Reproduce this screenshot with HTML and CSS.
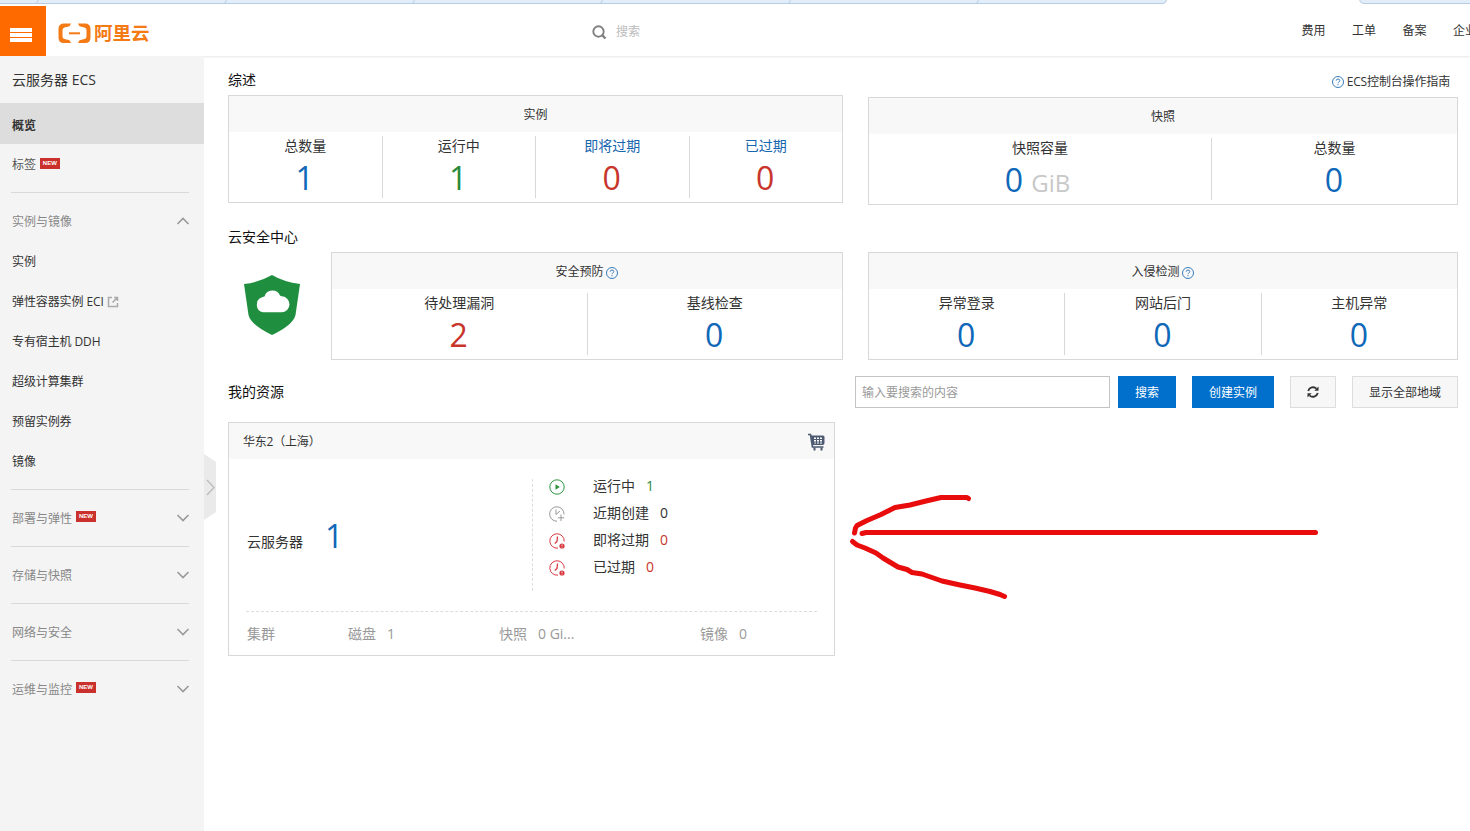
FILE: index.html
```
<!DOCTYPE html>
<html lang="zh-CN">
<head>
    <meta charset="UTF-8">
    <meta name="viewport" content="width=device-width, initial-scale=1.0">
    <title>云服务器 ECS</title>
    <link rel="stylesheet" href="styles.css">
</head>
<body>
    <!-- browser tabs -->
    <div class="tabs">
        <svg width="1470" height="6" viewBox="0 0 1470 6">
            <path d="M-2 -2V3.5H1163Q1166 3.5 1167 -1V-2Z" fill="#e2edfa" stroke="#b9cbe0"/>
            <path d="M1359 -2Q1360 3.5 1363 3.5H1472V-2Z" fill="#e2edfa" stroke="#b9cbe0"/>
            <path d="M38.500 0L36.500 3M226.500 0L225 3M414.500 0L413 3M602.500 0L601 3M790.500 0L789 3M978.500 0L977 3" stroke="#b9cbe0" fill="none"/>
        </svg>
    </div>

    <header class="header">
        <button class="menu"><i></i><i></i><i></i></button>
        <div class="logo">
            <svg width="33" height="21" viewBox="0 0 33 21">
                <path d="M13 0.500H6Q0.500 0.500 0.500 6V14.500Q0.500 20 6 20H13L11.500 17.200L6.500 16Q4.500 15.500 4.500 13.500V7Q4.500 5 6.500 4.500L11.500 3.300Z" fill="#f37a15"/>
                <path d="M20 0.500H27Q32.500 0.500 32.500 6V14.500Q32.500 20 27 20H20L21.500 17.200L26.500 16Q28.500 15.500 28.500 13.500V7Q28.500 5 26.500 4.500L21.500 3.300Z" fill="#f37a15"/>
                <path d="M11 10.300H22" stroke="#f37a15" stroke-width="2"/>
            </svg>
            <span>阿里云</span>
        </div>
        <div class="search">
            <svg width="15" height="15" viewBox="0 0 15 15" fill="none" stroke="#808080" stroke-width="1.900">
                <circle cx="6.500" cy="6.500" r="5.200"/>
                <path d="M10.200 10.200L13.500 13.500" stroke-width="2.400"/>
            </svg>
            <span>搜索</span>
        </div>
        <nav class="nav">
            <a href="#">费用</a>
            <a href="#">工单</a>
            <a href="#">备案</a>
            <a href="#">企业</a>
        </nav>
    </header>

    <div class="wrap">
        <aside class="side">
            <h1>云服务器 ECS</h1>
            <a class="item on" href="#">概览</a>
            <a class="item tag" href="#">标签<em class="new">NEW</em></a>

            <div class="group open">
                <h2>实例与镜像<svg class="arr" width="14" height="8" viewBox="0 0 14 8"><path d="M1.500 7L7 1.500L12.500 7"/></svg></h2>
                <ul>
                    <li><a class="item" href="#">实例</a></li>
                    <li><a class="item" href="#">弹性容器实例 ECI<svg class="ext" width="12" height="12" viewBox="0 0 12 12"><path d="M5 1.500H1.500V10.500H10.500V7M7 1.500H10.500V5M10.500 1.500L5.500 6.500"/></svg></a></li>
                    <li><a class="item" href="#">专有宿主机 DDH</a></li>
                    <li><a class="item" href="#">超级计算集群</a></li>
                    <li><a class="item" href="#">预留实例券</a></li>
                    <li><a class="item" href="#">镜像</a></li>
                </ul>
            </div>
            <div class="group">
                <h2>部署与弹性<em class="new">NEW</em><svg class="arr" width="14" height="8" viewBox="0 0 14 8"><path d="M1.500 1L7 6.500L12.500 1"/></svg></h2>
            </div>
            <div class="group">
                <h2>存储与快照<svg class="arr" width="14" height="8" viewBox="0 0 14 8"><path d="M1.500 1L7 6.500L12.500 1"/></svg></h2>
            </div>
            <div class="group">
                <h2>网络与安全<svg class="arr" width="14" height="8" viewBox="0 0 14 8"><path d="M1.500 1L7 6.500L12.500 1"/></svg></h2>
            </div>
            <div class="group">
                <h2>运维与监控<em class="new">NEW</em><svg class="arr" width="14" height="8" viewBox="0 0 14 8"><path d="M1.500 1L7 6.500L12.500 1"/></svg></h2>
            </div>
            <svg class="fold" width="12" height="66" viewBox="0 0 12 66">
                <path d="M0 0L12 8V58L0 66Z" fill="#eaeaea"/>
                <path d="M3 26L10 33.500L3 41" fill="none" stroke="#bbb" stroke-width="1.300"/>
            </svg>
        </aside>

        <main class="main">
            <!-- 综述 -->
            <section class="row overview">
                <div class="col-l">
                    <h3>综述</h3>
                    <div class="panel">
                        <h4>实例</h4>
                        <ul>
                            <li><p>总数量</p><b class="blue">1</b></li>
                            <li><p>运行中</p><b class="green">1</b></li>
                            <li><p class="link">即将过期</p><b class="red">0</b></li>
                            <li><p class="link">已过期</p><b class="red">0</b></li>
                        </ul>
                    </div>
                </div>
                <div class="col-r">
                    <a class="guide" href="#"><svg class="help" width="12" height="12" viewBox="0 0 12 12"><circle cx="6" cy="6" r="5.500"/><path d="M4.200 4.700Q4.300 3 6 3T7.800 4.600Q7.800 5.400 6.800 6Q6 6.500 6 7.200M6 8.200V9.300"/></svg>ECS控制台操作指南</a>
                    <div class="panel">
                        <h4>快照</h4>
                        <ul class="snap">
                            <li><p>快照容量</p><b class="blue">0 <small>GiB</small></b></li>
                            <li><p>总数量</p><b class="blue">0</b></li>
                        </ul>
                    </div>
                </div>
            </section>

            <!-- 云安全中心 -->
            <section>
                <h3 class="safe-tit">云安全中心</h3>
                <div class="row">
                    <div class="col-l safe">
                        <svg class="shield" width="56" height="60" viewBox="0 0 56 60">
                            <path d="M28 0Q40 7 56 9L51.500 40Q49 50 28 60Q7 50 4.500 40L0 9Q16 7 28 0Z" fill="#1f8f3f"/>
                            <path d="M19 37.300A7.800 7.800 0 0 1 18 22.300Q19.500 21.500 20.500 21.500A8.200 8.200 0 0 1 36 20.500Q37 21.300 37.500 21.300A8 8 0 0 1 37.500 37.300Z" fill="#fff"/>
                        </svg>
                        <div class="panel">
                            <h4>安全预防<svg class="help" width="12" height="12" viewBox="0 0 12 12"><circle cx="6" cy="6" r="5.500"/><path d="M4.200 4.700Q4.300 3 6 3T7.800 4.600Q7.800 5.400 6.800 6Q6 6.500 6 7.200M6 8.200V9.300"/></svg></h4>
                            <ul>
                                <li><p>待处理漏洞</p><b class="red">2</b></li>
                                <li><p>基线检查</p><b class="blue">0</b></li>
                            </ul>
                        </div>
                    </div>
                    <div class="col-r">
                        <div class="panel">
                            <h4>入侵检测<svg class="help" width="12" height="12" viewBox="0 0 12 12"><circle cx="6" cy="6" r="5.500"/><path d="M4.200 4.700Q4.300 3 6 3T7.800 4.600Q7.800 5.400 6.800 6Q6 6.500 6 7.200M6 8.200V9.300"/></svg></h4>
                            <ul>
                                <li><p>异常登录</p><b class="blue">0</b></li>
                                <li><p>网站后门</p><b class="blue">0</b></li>
                                <li><p>主机异常</p><b class="blue">0</b></li>
                            </ul>
                        </div>
                    </div>
                </div>
            </section>

            <!-- 我的资源 -->
            <section>
                <div class="bar">
                    <h3>我的资源</h3>
                    <form action="">
                        <input type="text" placeholder="输入要搜索的内容">
                        <button type="button" class="btn primary">搜索</button>
                    </form>
                    <button class="btn primary create">创建实例</button>
                    <button class="btn reload">
                        <svg width="12" height="12" viewBox="0 0 12 12">
                            <path d="M1.200 5A5 5 0 0 1 9.500 2.700M10.800 7A5 5 0 0 1 2.500 9.300" fill="none" stroke="#333" stroke-width="1.800"/>
                            <path d="M11.500 0.500V4.700H7.300ZM0.500 11.500V7.300H4.700Z" fill="#333"/>
                        </svg>
                    </button>
                    <button class="btn all">显示全部地域</button>
                </div>

                <div class="card">
                    <h4><span>华东2（上海）</span>
                        <svg width="17" height="18" viewBox="0 0 17 18">
                            <path d="M0 1.500H2.500L4.500 14H15.500" fill="none" stroke="#4c5b72" stroke-width="1.700"/>
                            <path d="M3 2.500H15Q16.500 2.500 16.500 4V10Q16.500 12 14.500 12H4.500Z" fill="#4c5b72"/>
                            <path d="M6 4.500H8V6H6ZM9 4.500H11V6H9ZM12 4.500H14V6H12ZM6 7H8V8.500H6ZM9 7H11V8.500H9ZM12 7H14V8.500H12ZM6.500 9.500H8V10.500H6.500ZM9 9.500H11V10.500H9ZM12 9.500H14V10.500H12Z" fill="#fff"/>
                            <path d="M5.500 14.500H7.500V17.500H5.500ZM12.500 14.500H14.500V17.500H12.500Z" fill="#4c5b72"/>
                        </svg>
                    </h4>
                    <div class="card-body">
                        <div class="server"><span>云服务器</span><b class="blue">1</b></div>
                        <ul class="state">
                            <li>
                                <svg width="16" height="16" viewBox="0 0 16 16"><circle cx="8" cy="8" r="7.200" fill="none" stroke="#2c9540"/><path d="M6.500 5.200V10.800L10.800 8Z" fill="#2c9540"/></svg>
                                <span>运行中</span><i class="green">1</i>
                            </li>
                            <li>
                                <svg width="16" height="16" viewBox="0 0 16 16" fill="none" stroke="#999"><path d="M8 15.200A7.200 7.200 0 1 1 15 8.500M7 3.500V8.500L11 5"/><path d="M12 8.500V15M8.800 11.800H15.200"/></svg>
                                <span>近期创建</span><i>0</i>
                            </li>
                            <li>
                                <svg width="16" height="16" viewBox="0 0 16 16"><path d="M9 15.100A7.200 7.200 0 1 1 15.200 8.500" fill="none" stroke="#d93840"/><path d="M8.500 3.500L8 8.500L5.800 10.500" fill="none" stroke="#d93840" stroke-width="1.300"/><circle cx="13" cy="13" r="2.600" fill="#d93840"/><path d="M13 11.500V13.200M13 13.800V14.500" stroke="#fff" stroke-width=".8"/></svg>
                                <span>即将过期</span><i class="red">0</i>
                            </li>
                            <li>
                                <svg width="16" height="16" viewBox="0 0 16 16"><path d="M9 15.100A7.200 7.200 0 1 1 15.200 8.500" fill="none" stroke="#d93840"/><path d="M8.500 3.500L8 8.500L5.800 10.500" fill="none" stroke="#d93840" stroke-width="1.300"/><circle cx="13" cy="13" r="2.600" fill="#d93840"/><path d="M13 11.500V13.200M13 13.800V14.500" stroke="#fff" stroke-width=".8"/></svg>
                                <span>已过期</span><i class="red">0</i>
                            </li>
                        </ul>
                    </div>
                    <ul class="card-foot">
                        <li>集群</li>
                        <li>磁盘<i>1</i></li>
                        <li>快照<i>0 Gi...</i></li>
                        <li>镜像<i>0</i></li>
                    </ul>
                </div>
            </section>
        </main>
    </div>

    <!-- hand drawn arrow -->
    <svg class="mark" width="490" height="130" viewBox="0 0 490 130">
        <path d="M128.500 18.500L127 17.500H101L86 21L70 25L55 27.500L41 34.500L27 40.500L17 45.500L15.500 48L14.500 53"/>
        <path d="M22 53.500L26 52.500H475.500"/>
        <path d="M12.500 61.500L17 65L25 68L36 73L43 78L58 87L67 89.500L72 92.500L82 94L102 101L120 105L135 108L150 111.500L160 114.500L164.500 116.500"/>
    </svg>
</body>
</html>
```
FILE: styles.css
```
* {
    margin: 0;
    padding: 0;
    box-sizing: border-box;
}
a {
    text-decoration: none;
    color: inherit;
}
li {
    list-style: none;
}
i, em {
    font-style: normal;
}
svg {
    display: block;
    flex: none;
}
body {
    height: 831px;
    overflow: hidden;
    background: #fff;
    color: #333;
    font: 12px/20px "Open Sans", "Noto Sans CJK SC", sans-serif;
}
button, input {
    font: inherit;
    border: 0;
    outline: 0;
}
.blue {
    color: #0f68b8;
}
.green {
    color: #2a8a3c;
}
.red {
    color: #c8352b;
}

/* top */
.tabs {
    height: 6px;
}
.header {
    display: flex;
    align-items: center;
    height: 50px;
    box-shadow: 0 1px 2px rgba(0,0,0,0.1);
}
.menu {
    display: flex;
    flex-direction: column;
    justify-content: center;
    gap: 1px;
    width: 46px;
    height: 50px;
    padding: 8px 14px 0 10px;
    background: #ff6a00;
}
.menu i {
    height: 4px;
    background: #fff;
}
.logo {
    display: flex;
    align-items: center;
    gap: 3px;
    width: 546px;
    padding: 5px 0 0 12px;
    color: #f37a15;
    font-size: 18.5px;
    font-weight: bold;
}
.logo span {
    margin-top: -2px;
}
.search {
    display: flex;
    align-items: center;
    gap: 9px;
    padding-top: 2px;
    color: #bbb;
}
.nav {
    display: flex;
    gap: 26.5px;
    margin-left: auto;
    margin-right: -7px;
}

.wrap {
    display: flex;
    height: 775px;
}

/* side */
.side {
    position: relative;
    width: 204px;
    background: #f4f4f4;
}
.side h1 {
    height: 47px;
    padding-left: 12px;
    font-size: 14px;
    font-weight: normal;
    line-height: 47px;
}
.item {
    display: flex;
    align-items: center;
    height: 40px;
    padding: 2px 0 0 12px;
    letter-spacing: -0.1px;
}
.item.on {
    height: 41px;
    padding-top: 4px;
    background: #ddd;
    font-weight: bold;
}
.tag {
    margin-bottom: 8px;
    color: #555;
}
.new {
    width: 20px;
    height: 11px;
    margin: -4px 0 0 4px;
    background: #cb312c;
    color: #fff;
    font: bold 6px/11px "Liberation Sans", sans-serif;
    letter-spacing: 0;
    text-align: center;
}
.group h2 {
    display: flex;
    align-items: center;
    height: 57px;
    margin: 0 14px 0 11px;
    padding: 2px 0 0 1px;
    color: #888;
    font-size: 12px;
    font-weight: normal;
}
.group::before {
    content: "";
    display: block;
    height: 1px;
    margin: 0 15px -1px 11px;
    background: #d9d9d9;
}
.open {
    padding-bottom: 8px;
}
.open ul {
    margin-top: -8px;
}
.arr {
    margin: -1px 0 0 auto;
    fill: none;
    stroke: #999;
    stroke-width: 1.6;
}
.ext {
    margin: -1px 0 0 3px;
    fill: none;
    stroke: #aaa;
    stroke-width: 1.5;
}
.fold {
    position: absolute;
    left: 204px;
    top: 398px;
}

/* main */
.main {
    flex: 1;
    padding: 14px 12px 0 24px;
}
.main h3 {
    color: #111;
    font-size: 14px;
    font-weight: normal;
    line-height: 20px;
}
.row {
    display: flex;
    justify-content: space-between;
}
.col-l {
    width: 615px;
}
.col-r {
    width: 590px;
}
.overview h3 {
    margin-bottom: 5px;
}
.guide {
    display: flex;
    align-items: center;
    justify-content: flex-end;
    gap: 3px;
    height: 22px;
    margin-bottom: 5px;
    padding: 1px 8px 0 0;
    letter-spacing: -0.15px;
}
.help {
    fill: none;
    stroke: #3a7cba;
}
.panel {
    height: 108px;
    border: 1px solid #d8d8d8;
}
.panel h4 {
    display: flex;
    align-items: center;
    justify-content: center;
    gap: 3px;
    height: 36px;
    padding-top: 2px;
    background: #f8f8f8;
    font-size: 12px;
    font-weight: normal;
}
.panel h4 .help {
    margin: 1px 1px 0 -1px;
}
.panel ul {
    display: flex;
    height: 62px;
    margin-top: 4px;
}
.panel li {
    flex: 1;
    border-right: 1px solid #d8d8d8;
    text-align: center;
}
.panel li:last-child {
    border-right: 0;
}
.panel p {
    font-size: 14px;
    line-height: 20px;
}
.panel .link {
    color: #1766ae;
}
.panel b {
    display: block;
    margin-left: -1px;
    font-size: 32px;
    font-weight: normal;
    line-height: 44px;
}
.panel small {
    color: #c8c8c8;
    font-size: 24px;
}
.panel .snap li:first-child {
    flex: none;
    width: 343px;
}
.snap li:first-child b {
    margin-left: -5px;
}
.safe-tit {
    margin: 22px 0 5px;
}
.safe {
    display: flex;
}
.safe .panel {
    flex: 1;
}
.shield {
    margin: 23px 31px 0 16px;
}

/* resource */
.bar {
    display: flex;
    height: 32px;
    margin: 16px 0 14px;
}
.bar h3 {
    margin-right: auto;
    line-height: 32px;
}
.bar form {
    display: flex;
    gap: 8px;
}
.bar input {
    width: 255px;
    padding: 2px 6px 0;
    border: 1px solid #c4c4c4;
}
.bar input::placeholder {
    color: #999;
}
.btn {
    height: 32px;
    padding-top: 2px;
    border: 1px solid #ddd;
    background: #f7f7f7;
    color: #333;
}
.primary {
    width: 58px;
    border-color: #0070cc;
    background: #0070cc;
    color: #fff;
}
.create {
    width: 82px;
    margin: 0 16px;
}
.reload {
    display: flex;
    align-items: center;
    justify-content: center;
    width: 46px;
    padding-top: 0;
}
.all {
    width: 106px;
    margin-left: 16px;
}
.card {
    width: 607px;
    height: 234px;
    border: 1px solid #d8d8d8;
}
.card h4 {
    display: flex;
    align-items: center;
    justify-content: space-between;
    height: 36px;
    padding: 1px 9px 0 14px;
    background: #f8f8f8;
    font-size: 12px;
    font-weight: normal;
}
.card h4 span {
    padding-top: 1px;
    letter-spacing: -0.2px;
}
.card-body {
    display: flex;
    height: 153px;
    margin: 0 17px;
    padding-top: 20px;
    border-bottom: 1px dashed #ddd;
    font-size: 14px;
}
.server {
    display: flex;
    align-items: center;
    width: 286px;
    height: 112px;
    padding: 2px 0 0 1px;
}
.server span {
    width: 78px;
    padding-top: 12px;
}
.server b {
    font-size: 32px;
    font-weight: normal;
}
.state {
    height: 112px;
    padding-left: 16px;
    border-left: 1px dashed #ddd;
}
.state li {
    display: flex;
    align-items: center;
    height: 27px;
}
.state li:first-child {
    margin-top: -7px;
}
.state svg {
    margin: 3px 28px 0 0;
}
.state i {
    margin-left: 11px;
}
.card-foot {
    display: grid;
    grid-template-columns: 101px 151px 201px auto;
    padding: 12px 0 0 18px;
    color: #999;
    font-size: 14px;
}
.card-foot i {
    margin-left: 11px;
}

/* arrow over the page */
.mark {
    position: absolute;
    left: 840px;
    top: 480px;
    fill: none;
    stroke: #e80c0c;
    stroke-width: 5;
    stroke-linecap: round;
    stroke-linejoin: round;
}
```
